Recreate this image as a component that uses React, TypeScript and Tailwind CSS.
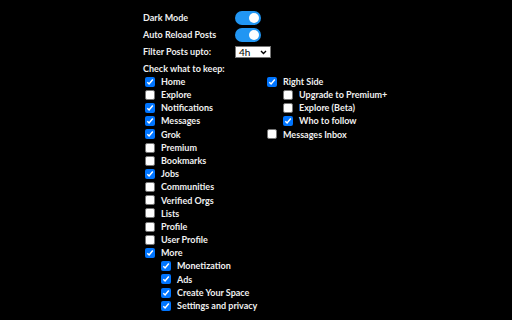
import React from "react";

const font = { fontFamily: "Lato, 'Liberation Sans', sans-serif" };

function Toggle() {
  return (
    <span className="relative inline-block w-[26px] h-[14px] rounded-full bg-[#2196f3]">
      <span className="absolute right-[2px] top-[2px] w-[10px] h-[10px] rounded-full bg-white" />
    </span>
  );
}

function Box({ checked }: { checked: boolean }) {
  return checked ? (
    <span className="inline-flex items-center justify-center w-[10px] h-[10px] rounded-[2px] bg-[#0075ff] shrink-0">
      <svg width="8" height="8" viewBox="0 0 8 8">
        <path d="M1.3 4.2 L3.1 6 L6.8 1.6" stroke="white" strokeWidth="1.5" fill="none" />
      </svg>
    </span>
  ) : (
    <span className="inline-block w-[10px] h-[10px] rounded-[2px] bg-white border border-[#767676] shrink-0" />
  );
}

type Item = { label: string; checked: boolean; indent?: boolean };

function Row({ item }: { item: Item }) {
  return (
    <div className={`flex items-center h-[13.2px] gap-[6px] ${item.indent ? "pl-[16px]" : ""}`}>
      <Box checked={item.checked} />
      <span className="whitespace-nowrap">{item.label}</span>
    </div>
  );
}

const left: Item[] = [
  { label: "Home", checked: true },
  { label: "Explore", checked: false },
  { label: "Notifications", checked: true },
  { label: "Messages", checked: true },
  { label: "Grok", checked: true },
  { label: "Premium", checked: false },
  { label: "Bookmarks", checked: false },
  { label: "Jobs", checked: true },
  { label: "Communities", checked: false },
  { label: "Verified Orgs", checked: false },
  { label: "Lists", checked: false },
  { label: "Profile", checked: false },
  { label: "User Profile", checked: false },
  { label: "More", checked: true },
  { label: "Monetization", checked: true, indent: true },
  { label: "Ads", checked: true, indent: true },
  { label: "Create Your Space", checked: true, indent: true },
  { label: "Settings and privacy", checked: true, indent: true },
];

const right: Item[] = [
  { label: "Right Side", checked: true },
  { label: "Upgrade to Premium+", checked: false, indent: true },
  { label: "Explore (Beta)", checked: false, indent: true },
  { label: "Who to follow", checked: true, indent: true },
  { label: "Messages Inbox", checked: false },
];

export default function App() {
  return (
    <div className="w-[512px] h-[320px] bg-black text-[#f0f0f0] font-bold text-[9px] overflow-hidden pt-[11px] pl-[143px]" style={font}>
      <div className="flex items-center h-[14px]">
        <span className="w-[92px]">Dark Mode</span>
        <Toggle />
      </div>
      <div className="flex items-center h-[14px] mt-[3px]">
        <span className="w-[92px]">Auto Reload Posts</span>
        <Toggle />
      </div>
      <div className="flex items-center h-[12px] mt-[4px]">
        <span className="w-[92px]">Filter Posts upto:</span>
        <span className="flex items-center justify-between w-[36px] h-[12px] bg-white border border-[#767676] text-black font-normal text-[10px] pl-[3px] pr-[3px]">
          <span className="leading-none">4h</span>
          <svg width="7" height="5" viewBox="0 0 7 5">
            <path d="M1 1 L3.5 3.5 L6 1" stroke="black" strokeWidth="1.4" fill="none" />
          </svg>
        </span>
      </div>
      <div className="flex items-center h-[13px] mt-[4px]">Check what to keep:</div>
      <div className="flex pl-[2px]">
        <div className="w-[122px]">
          {left.map((it) => (
            <Row key={it.label} item={it} />
          ))}
        </div>
        <div>
          {right.map((it) => (
            <Row key={it.label} item={it} />
          ))}
        </div>
      </div>
    </div>
  );
}
